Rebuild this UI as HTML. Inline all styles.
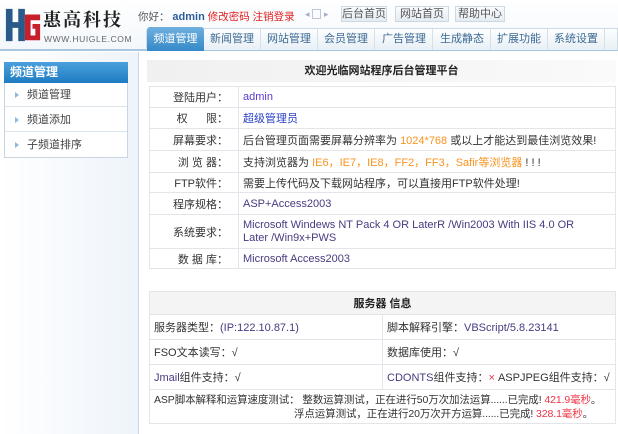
<!DOCTYPE html>
<html><head><meta charset="utf-8">
<style>
*{margin:0;padding:0;box-sizing:border-box}
body{width:618px;height:434px;overflow:hidden;background:#fff;font-family:"Liberation Sans","Noto Sans CJK SC",sans-serif;font-size:11px;color:#333;position:relative}
.abs{position:absolute;white-space:nowrap}
#hdr{left:0;top:0;width:618px;height:51px;background:linear-gradient(#fff,#f3f7fb);border-bottom:2px solid #a9c8e0}
.btn{position:absolute;top:6px;height:16px;border:1px solid #cdd8e2;background:linear-gradient(#fafcfe,#e4ecf3);color:#555;font-size:11px;text-align:center;line-height:14px}
#tabs{left:146px;top:28px;width:472px;height:22px;background:linear-gradient(#fdfefe,#e8eff5);border:1px solid #d0dbe5;border-bottom:none;border-radius:4px 0 0 0}
.tab{position:absolute;top:29px;height:21px;width:57px;text-align:center;line-height:21px;font-size:11px;color:#3d6a94;border-right:1px solid #d6e0ea;white-space:nowrap}
.tab.on{background:linear-gradient(#6fb0e0,#3589c8);color:#fff;border:none;border-radius:3px 3px 0 0;top:27px;height:24px;line-height:24px}
#side{left:0;top:52px;width:139px;height:382px;background:linear-gradient(90deg,#fff,#eef4fa);border-right:1px solid #c8d8e8}
#sbox{left:4px;top:62px;width:124px;height:96px;border:1px solid #c8d6e3;background:#fff}
#stitle{left:4px;top:62px;width:124px;height:21px;background:linear-gradient(#4aa0dc,#1e7cc2);color:#fff;font-weight:bold;padding-left:6px;line-height:21px;font-size:12px}
.si{position:absolute;left:5px;width:122px;height:24px;line-height:24px;border-bottom:1px solid #dde5ec;padding-left:22px;color:#444}
.si:before{content:"";position:absolute;left:10px;top:9px;border:3px solid transparent;border-left:4px solid #8bb8dc}
table{border-collapse:collapse;position:absolute;left:149px;width:467px;table-layout:fixed}
td{border:1px solid #e2e6ea;padding:0 4px;vertical-align:middle;white-space:nowrap;overflow:hidden}
.l{text-align:right;padding-right:10px}
.p{color:#4a3a80}
.o{color:#f7931e}
.r{color:#ee3344}
</style></head><body>
<div id="hdr" class="abs"></div>
<svg class="abs" style="left:4px;top:6px" width="38" height="38" viewBox="0 0 40 38">
<path d="M2 2h7v14h6V2h7v34h-7V22H9v14H2z" fill="#2a5a8a"/>
<path d="M22 8h16v6H28v16h5v-7h-3v-5h8v17H22z" fill="#c8202a"/>
</svg>
<div class="abs" style="left:43px;top:8px;font-size:18px;font-weight:bold;color:#222;letter-spacing:2px;font-family:'Noto Serif CJK SC','Noto Sans CJK SC',serif;line-height:22px">惠高科技</div>
<div class="abs" style="left:44px;top:34px;font-size:8.5px;color:#666;letter-spacing:0.6px">WWW.HUIGLE.COM</div>
<div class="abs" style="left:138px;top:9px;font-size:10.5px;color:#555">你好：&nbsp;<b style="color:#2c5e9c;font-size:11px">admin</b>&nbsp;<span style="color:#e02020">修改密码 注销登录</span></div>
<div class="abs" style="left:305px;top:9px;color:#aac;font-size:9px">◂</div>
<div class="abs" style="left:312px;top:9px;width:9px;height:10px;border:1px solid #bbc8d6"></div>
<div class="abs" style="left:324px;top:9px;color:#aac;font-size:9px">▸</div>
<div class="btn" style="left:341px;width:46px">后台首页</div>
<div class="btn" style="left:395px;width:54px">网站首页</div>
<div class="btn" style="left:455px;width:50px">帮助中心</div>
<div id="tabs" class="abs"></div>
<div class="tab on" style="left:147px">频道管理</div>
<div class="tab" style="left:204px">新闻管理</div>
<div class="tab" style="left:261px">网站管理</div>
<div class="tab" style="left:318px">会员管理</div>
<div class="tab" style="left:376px">广告管理</div>
<div class="tab" style="left:434px">生成静态</div>
<div class="tab" style="left:491px">扩展功能</div>
<div class="tab" style="left:548px">系统设置</div>
<div id="side" class="abs"></div>
<div id="sbox" class="abs"></div>
<div id="stitle" class="abs">频道管理</div>
<div class="si" style="top:83px">频道管理</div>
<div class="si" style="top:108px">频道添加</div>
<div class="si" style="top:133px;border:none">子频道排序</div>
<div class="abs" style="left:147px;top:60px;width:469px;height:22px;background:linear-gradient(90deg,#f0f0f0,#fafafa);text-align:center;line-height:22px;font-weight:bold;color:#222">欢迎光临网站程序后台管理平台</div>
<table style="top:86px">
<colgroup><col style="width:89px"><col></colgroup>
<tr style="height:21px"><td class="l">登陆用户：</td><td style="color:#5a3ad0">admin</td></tr>
<tr style="height:21px"><td class="l">权&nbsp;&nbsp;&nbsp;&nbsp;&nbsp;&nbsp;限：</td><td style="color:#2a40c8">超级管理员</td></tr>
<tr style="height:22px"><td class="l">屏幕要求：</td><td>后台管理页面需要屏幕分辨率为 <span class="o">1024*768</span> 或以上才能达到最佳浏览效果!</td></tr>
<tr style="height:22px"><td class="l">浏 览 器：</td><td>支持浏览器为 <span class="o">IE6，IE7，IE8，FF2，FF3，Safir等浏览器</span> ! ! !</td></tr>
<tr style="height:20px"><td class="l">FTP软件：</td><td>需要上传代码及下载网站程序，可以直接用FTP软件处理!</td></tr>
<tr style="height:22px"><td class="l">程序规格：</td><td class="p">ASP+Access2003</td></tr>
<tr style="height:34px"><td class="l">系统要求：</td><td class="p" style="line-height:13px">Microsoft Windews NT Pack 4 OR LaterR /Win2003 With IIS 4.0 OR<br>Later /Win9x+PWS</td></tr>
<tr style="height:20px"><td class="l">数 据 库：</td><td class="p">Microsoft Access2003</td></tr>
</table>
<table style="top:291px">
<colgroup><col style="width:233px"><col></colgroup>
<tr style="height:23px"><td colspan="2" style="text-align:center;font-weight:bold;background:#f4f4f4;color:#222">服务器 信息</td></tr>
<tr style="height:25px"><td>服务器类型：<span class="p">(IP:122.10.87.1)</span></td><td>脚本解释引擎：<span class="p">VBScript/5.8.23141</span></td></tr>
<tr style="height:25px"><td>FSO文本读写：√</td><td>数据库使用：√</td></tr>
<tr style="height:25px"><td><span class="p">Jmail</span>组件支持：√</td><td><span class="p">CDONTS</span>组件支持：<span class="r">×</span> ASPJPEG组件支持：√</td></tr>
<tr style="height:34px"><td colspan="2" style="line-height:14px;font-size:10.5px;letter-spacing:-0.1px">ASP脚本解释和运算速度测试：&nbsp;整数运算测试，正在进行50万次加法运算......已完成! <span class="r">421.9毫秒</span>。<br><span style="padding-left:140px">浮点运算测试，正在进行20万次开方运算......已完成! <span class="r">328.1毫秒</span>。</span></td></tr>
</table>
</body></html>
